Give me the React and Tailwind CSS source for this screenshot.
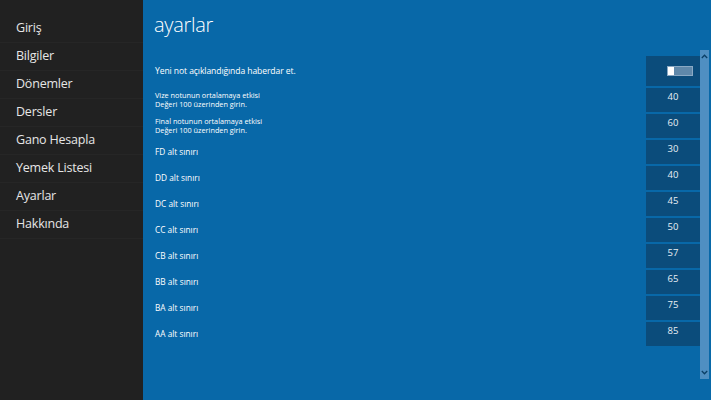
import React from "react";

const nav = ["Giriş", "Bilgiler", "Dönemler", "Dersler", "Gano Hesapla", "Yemek Listesi", "Ayarlar", "Hakkında"];

const grades = [
  ["FD alt sınırı", "30"],
  ["DD alt sınırı", "40"],
  ["DC alt sınırı", "45"],
  ["CC alt sınırı", "50"],
  ["CB alt sınırı", "57"],
  ["BB alt sınırı", "65"],
  ["BA alt sınırı", "75"],
  ["AA alt sınırı", "85"],
];

function Box({ value }) {
  return (
    <div className="w-[54px] h-[24px] bg-[#0b4c7b] text-center text-[9.5px] leading-[10px] pt-[4px] text-[#e8eef4]">
      {value}
    </div>
  );
}

export default function App() {
  return (
    <div
      className="w-[711px] h-[400px] flex overflow-hidden"
      style={{ fontFamily: '"Open Sans", "Noto Sans", sans-serif' }}
    >
      <div className="w-[143px] h-full bg-[#212121] pt-[15px] flex flex-col">
        {nav.map((n) => (
          <div
            key={n}
            className="h-[28px] border-b border-[#262626] pl-[16px] flex items-center text-[12.5px] text-[#e6e6e6] tracking-[-0.2px]"
          >
            {n}
          </div>
        ))}
      </div>
      <div className="flex-1 h-full bg-[#0868a8] flex">
        <div className="flex-1 flex flex-col pl-[11px]">
          <div className="mt-[13px] h-[24px] leading-[24px] text-[20px] font-light text-white tracking-[-0.3px]">
            ayarlar
          </div>
          <div className="mt-[19px] flex flex-col gap-[2px]">
            <div className="flex items-center h-[30px]">
              <div className="flex-1 text-[8.6px] text-white pl-[1px] tracking-[-0.1px]">Yeni not açıklandığında haberdar et.</div>
              <div className="w-[54px] h-[30px] bg-[#0b4c7b] flex items-center justify-center pl-[13px]">
                <div className="w-[26px] h-[10px] border border-[#8aa9c4] bg-[#5f88aa] flex">
                  <div className="w-[6px] h-full bg-white"></div>
                </div>
              </div>
            </div>
            {[
              ["Vize notunun ortalamaya etkisi", "40"],
              ["Final notunun ortalamaya etkisi", "60"],
            ].map(([l, v]) => (
              <div key={l} className="flex items-center h-[24px]">
                <div className="flex-1 text-[7.3px] leading-[9px] text-white pl-[1px]">
                  <div>{l}</div>
                  <div>Değeri 100 üzerinden girin.</div>
                </div>
                <Box value={v} />
              </div>
            ))}
            {grades.map(([l, v]) => (
              <div key={l} className="flex items-center h-[24px]">
                <div className="flex-1 text-[8.3px] text-white pl-[1px]">{l}</div>
                <Box value={v} />
              </div>
            ))}
          </div>
        </div>
        <div className="w-[9px] mr-[2px] mt-[50px] h-[329px] bg-[#4f8fc2] flex flex-col items-center justify-between py-[4px]">
          <svg width="7" height="5" viewBox="0 0 7 5">
            <path d="M0.8 4 L3.5 1.2 L6.2 4" stroke="#0b3f66" strokeWidth="1.3" fill="none" />
          </svg>
          <svg width="7" height="5" viewBox="0 0 7 5">
            <path d="M0.8 1 L3.5 3.8 L6.2 1" stroke="#0b3f66" strokeWidth="1.3" fill="none" />
          </svg>
        </div>
      </div>
    </div>
  );
}
